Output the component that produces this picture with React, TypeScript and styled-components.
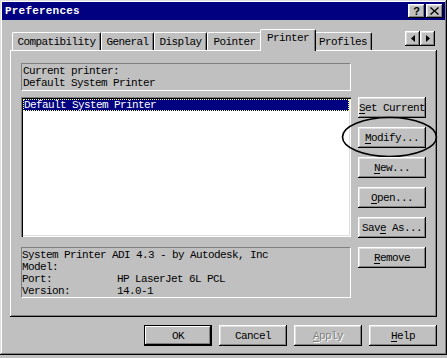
import React from 'react'
import styled, { createGlobalStyle, css } from 'styled-components'

const GlobalStyle = createGlobalStyle`
  html, body {
    margin: 0;
    padding: 0;
    background: #c0c0c0;
  }
  * {
    box-sizing: border-box;
  }
`

const FONT = `'Liberation Mono', 'DejaVu Sans Mono', monospace`

const raised = css`
  box-shadow: inset -1px -1px 0 #000, inset 1px 1px 0 #fff, inset -2px -2px 0 #808080, inset 2px 2px 0 #dfdfdf;
`

const tabs = ['Compatibility', 'General', 'Display', 'Pointer', 'Printer', 'Profiles']
const tabWidths = [89, 53, 53, 55, 56, 58]

const sideButtons: { label: string; key: number }[] = [
  { label: 'Set Current', key: 0 },
  { label: 'Modify...', key: 0 },
  { label: 'New...', key: 0 },
  { label: 'Open...', key: 0 },
  { label: 'Save As...', key: 3 },
  { label: 'Remove', key: 0 },
]

const Mnemonic = ({ label, index }: { label: string; index: number }) => (
  <>
    {label.slice(0, index)}
    <u>{label[index]}</u>
    {label.slice(index + 1)}
  </>
)

const App = () => {
  return (
    <>
      <GlobalStyle />
      <SWindow>
        <STitleBar>
          <STitle>Preferences</STitle>
          <STitleButtons>
            <STitleButton>?</STitleButton>
            <STitleButton>
              <svg width="9" height="8" viewBox="0 0 9 8">
                <path d="M1 0 L4.5 3.2 L8 0 L9 1 L5.5 4 L9 7 L8 8 L4.5 4.8 L1 8 L0 7 L3.5 4 L0 1 Z" fill="#000" />
              </svg>
            </STitleButton>
          </STitleButtons>
        </STitleBar>

        <SBody>
          <STabStrip>
            {tabs.map((t, i) => (
              <STab key={t} $active={t === 'Printer'} style={{ width: tabWidths[i] }}>
                {t}
              </STab>
            ))}
            <SScroller>
              <SArrowButton>
                <svg width="4" height="7" viewBox="0 0 4 7">
                  <path d="M4 0 L0 3.5 L4 7 Z" fill="#000" />
                </svg>
              </SArrowButton>
              <SArrowButton>
                <svg width="4" height="7" viewBox="0 0 4 7">
                  <path d="M0 0 L4 3.5 L0 7 Z" fill="#000" />
                </svg>
              </SArrowButton>
            </SScroller>
          </STabStrip>

          <SPanel>
            <SLeftColumn>
              <SEtchedBox>
                <div>Current printer:</div>
                <div>Default System Printer</div>
              </SEtchedBox>
              <SListBox>
                <SListItem $selected>Default System Printer</SListItem>
              </SListBox>
              <SInfoBox>
                <div>System Printer ADI 4.3 - by Autodesk, Inc</div>
                <SInfoRow>
                  <span>Model:</span>
                  <span />
                </SInfoRow>
                <SInfoRow>
                  <span>Port:</span>
                  <span>HP LaserJet 6L PCL</span>
                </SInfoRow>
                <SInfoRow>
                  <span>Version:</span>
                  <span>14.0-1</span>
                </SInfoRow>
              </SInfoBox>
            </SLeftColumn>

            <SRightColumn>
              {sideButtons.map(b => (
                <SButtonSlot key={b.label}>
                  <SButton>
                    <Mnemonic label={b.label} index={b.key} />
                  </SButton>
                  {b.label === 'Modify...' && (
                    <SCircle width="97" height="42" viewBox="0 0 97 42">
                      <ellipse cx="48.5" cy="21" rx="47" ry="19.5" fill="none" stroke="#000" strokeWidth="1.6" />
                    </SCircle>
                  )}
                </SButtonSlot>
              ))}
            </SRightColumn>
          </SPanel>

          <SFooter>
            <SButton $default>OK</SButton>
            <SButton>Cancel</SButton>
            <SButton $disabled>
              <Mnemonic label="Apply" index={0} />
            </SButton>
            <SButton>
              <Mnemonic label="Help" index={0} />
            </SButton>
          </SFooter>
        </SBody>
      </SWindow>
    </>
  )
}

const SWindow = styled.div`
  width: 447px;
  height: 355px;
  padding: 2px;
  background: #c0c0c0;
  box-shadow: inset -1px -1px 0 #000, inset 1px 1px 0 #dfdfdf, inset -2px -2px 0 #808080, inset 2px 2px 0 #fff;
  font-family: ${FONT};
  font-size: 11px;
  letter-spacing: -0.6px;
  color: #000;
  display: flex;
  flex-direction: column;
`

const STitleBar = styled.div`
  height: 18px;
  background: #000080;
  display: flex;
  align-items: center;
  justify-content: space-between;
  padding: 0 2px 0 3px;
`

const STitle = styled.div`
  color: #fff;
  font-weight: bold;
  font-size: 11px;
  letter-spacing: 0.2px;
`

const STitleButtons = styled.div`
  display: flex;
  gap: 1px;
`

const STitleButton = styled.div`
  width: 17px;
  height: 14px;
  background: #c0c0c0;
  ${raised};
  display: flex;
  align-items: center;
  justify-content: center;
  font-family: 'Liberation Sans', sans-serif;
  font-weight: bold;
  font-size: 11px;
  letter-spacing: 0;
  line-height: 1;
`

const SBody = styled.div`
  flex: 1;
  display: flex;
  flex-direction: column;
  padding: 9px 8px 0 8px;
`

const STabStrip = styled.div`
  height: 21px;
  display: flex;
  align-items: flex-end;
  padding-left: 2px;
  position: relative;
  z-index: 1;
`

const STab = styled.div<{ $active?: boolean }>`
  height: ${({ $active }) => ($active ? '22px' : '18px')};
  margin: ${({ $active }) => ($active ? '0 -2px -1px -2px' : '0')};
  padding-top: ${({ $active }) => ($active ? '2px' : '3px')};
  background: #c0c0c0;
  border-top: 1px solid #fff;
  border-left: 1px solid #fff;
  border-right: 1px solid #000;
  border-radius: 2px 2px 0 0;
  box-shadow: inset -1px 0 0 #808080;
  text-align: center;
  white-space: nowrap;
  position: relative;
  z-index: ${({ $active }) => ($active ? 2 : 0)};
`

const SScroller = styled.div`
  display: flex;
  margin-left: auto;
  margin-right: 2px;
  align-self: flex-start;
  margin-top: 2px;
`

const SArrowButton = styled.div`
  width: 15px;
  height: 15px;
  background: #c0c0c0;
  ${raised};
  display: flex;
  align-items: center;
  justify-content: center;
`

const SPanel = styled.div`
  height: 267px;
  width: 427px;
  background: #c0c0c0;
  box-shadow: inset -1px -1px 0 #000, inset 1px 1px 0 #fff, inset -2px -2px 0 #808080;
  display: flex;
  padding: 13px 10px 0 11px;
  gap: 7px;
`

const SLeftColumn = styled.div`
  width: 330px;
  display: flex;
  flex-direction: column;
`

const SEtchedBox = styled.div`
  height: 28px;
  border-top: 1px solid #808080;
  border-left: 1px solid #808080;
  border-bottom: 1px solid #fff;
  border-right: 1px solid #fff;
  padding: 1px 1px 0 1px;
  line-height: 12px;
  white-space: pre;
`

const SListBox = styled.div`
  height: 140px;
  margin-top: 6px;
  background: #fff;
  box-shadow: inset 1px 1px 0 #808080, inset 2px 2px 0 #000, inset -1px -1px 0 #fff, inset -2px -2px 0 #dfdfdf;
  padding: 2px;
`

const SListItem = styled.div<{ $selected?: boolean }>`
  height: 12px;
  line-height: 12px;
  padding-left: 1px;
  white-space: pre;
  ${({ $selected }) => $selected && css`
    background: #000080;
    color: #fff;
    outline: 1px dotted #ffff80;
    outline-offset: -1px;
  `}
`

const SInfoBox = styled.div`
  height: 51px;
  margin-top: 10px;
  border-top: 1px solid #808080;
  border-left: 1px solid #808080;
  border-bottom: 1px solid #fff;
  border-right: 1px solid #fff;
  padding: 1px 0 0 0;
  line-height: 12px;
  white-space: pre;
`

const SInfoRow = styled.div`
  display: grid;
  grid-template-columns: 95px 1fr;
`

const SRightColumn = styled.div`
  width: 68px;
  display: flex;
  flex-direction: column;
  gap: 9px;
  padding-top: 34px;
`

const SButtonSlot = styled.div`
  position: relative;
`

const SCircle = styled.svg`
  position: absolute;
  left: -17px;
  top: -11px;
  pointer-events: none;
`

const SButton = styled.div<{ $default?: boolean; $disabled?: boolean }>`
  width: 68px;
  height: 21px;
  background: #c0c0c0;
  display: flex;
  align-items: center;
  justify-content: center;
  white-space: pre;
  ${raised};
  ${({ $default }) => $default && css`
    box-shadow: inset 0 0 0 1px #000, inset -2px -2px 0 #000, inset 2px 2px 0 #fff, inset -3px -3px 0 #808080;
  `}
  ${({ $disabled }) => $disabled && css`
    color: #808080;
    text-shadow: 1px 1px 0 #fff;
  `}
  u {
    text-decoration-thickness: 1px;
    text-underline-offset: 2px;
  }
`

const SFooter = styled.div`
  display: flex;
  justify-content: flex-end;
  gap: 7px;
  margin-top: 8px;
`

export default App
